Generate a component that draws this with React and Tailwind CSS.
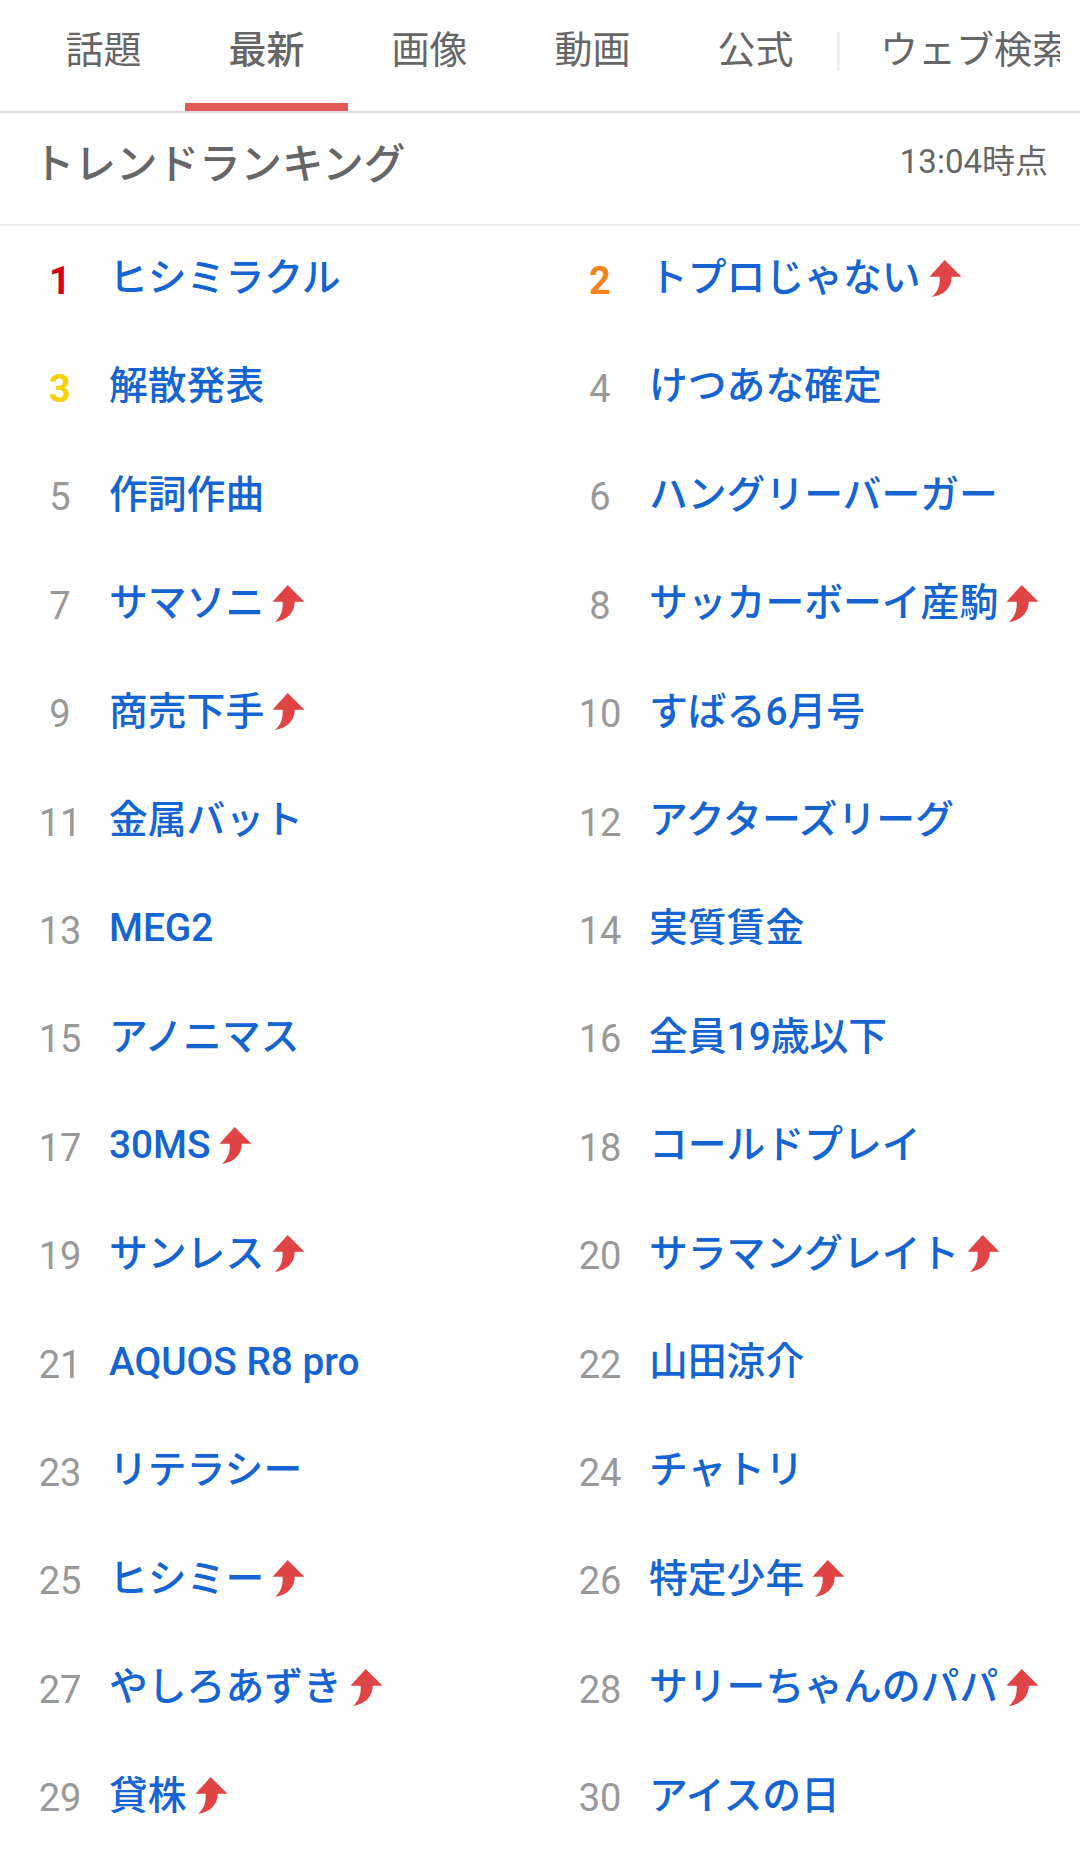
import React from 'react';

const tabs = ['話題', '最新', '画像', '動画', '公式'];

const trends = [
    ['ヒシミラクル', false], ['トプロじゃない', true],
    ['解散発表', false], ['けつあな確定', false],
    ['作詞作曲', false], ['ハングリーバーガー', false],
    ['サマソニ', true], ['サッカーボーイ産駒', true],
    ['商売下手', true], ['すばる6月号', false],
    ['金属バット', false], ['アクターズリーグ', false],
    ['MEG2', false], ['実質賃金', false],
    ['アノニマス', false], ['全員19歳以下', false],
    ['30MS', true], ['コールドプレイ', false],
    ['サンレス', true], ['サラマングレイト', true],
    ['AQUOS R8 pro', false], ['山田涼介', false],
    ['リテラシー', false], ['チャトリ', false],
    ['ヒシミー', true], ['特定少年', true],
    ['やしろあずき', true], ['サリーちゃんのパパ', true],
    ['貸株', true], ['アイスの日', false],
];

const rankColor = (rank) => {
    if (rank === 1) return 'text-[#d0021b] font-bold';
    if (rank === 2) return 'text-[#f58220] font-bold';
    if (rank === 3) return 'text-[#f8d000] font-bold';
    return 'text-[#999999] font-normal';
};

const UpArrow = () => (
    <svg className="ml-[8px] h-[37px] w-[33px] shrink-0" viewBox="0 0 95 110">
        <path d="M45 0 L95 50 L66 50 C66 85 40 105 7 110 C25 95 32 75 30 50 L0 50 Z" fill="#e04444" />
    </svg>
);

const App = () => {
    return (
        <div className="w-[1080px] h-[1862px] overflow-hidden bg-white font-['Roboto','Noto_Sans_CJK_JP',sans-serif]">
            {/* Tabs */}
            <div className="flex h-[111px] pl-[22px] pr-[20px] border-b-[2px] border-[#dddddd] box-content">
                {tabs.map((tab, i) => (
                    <div
                        key={tab}
                        className={`relative flex w-[163px] shrink-0 justify-center pt-[25px] text-[38px] leading-[50px] text-[#666666] ${i === 1 ? 'font-medium' : ''}`}
                    >
                        {tab}
                        {i === 1 && <div className="absolute bottom-0 left-0 right-0 h-[8px] bg-[#e05a58]" />}
                    </div>
                ))}
                <div className="mt-[32px] h-[39px] w-[3px] shrink-0 bg-[#eeeeee]" />
                <div className="overflow-hidden ml-[40px] pt-[25px] text-[38px] leading-[50px] whitespace-nowrap text-[#666666]">
                    ウェブ検索
                </div>
            </div>

            {/* Heading */}
            <div className="flex h-[113px] items-start justify-between pl-[33px] pr-[32px] pt-[22px] border-b-[2px] border-[#eeeeee]">
                <div className="text-[41.5px] leading-[60px] font-medium text-[#666666]">トレンドランキング</div>
                <div className="text-[33px] leading-[54px] text-[#666666]">13:04時点</div>
            </div>

            {/* Ranking */}
            <div className="grid grid-cols-2 auto-rows-[108.4px] -mt-[2px]">
                {trends.map(([name, rising], i) => (
                    <div key={name} className="flex items-center">
                        <div className={`w-[120px] shrink-0 pt-[6px] text-center text-[38px] ${rankColor(i + 1)}`}>
                            {i + 1}
                        </div>
                        <div className="-ml-[11px] whitespace-nowrap text-[38.8px] font-medium text-[#1464d2]">{name}</div>
                        {rising && <UpArrow />}
                    </div>
                ))}
            </div>
        </div>
    );
};

export default App;
